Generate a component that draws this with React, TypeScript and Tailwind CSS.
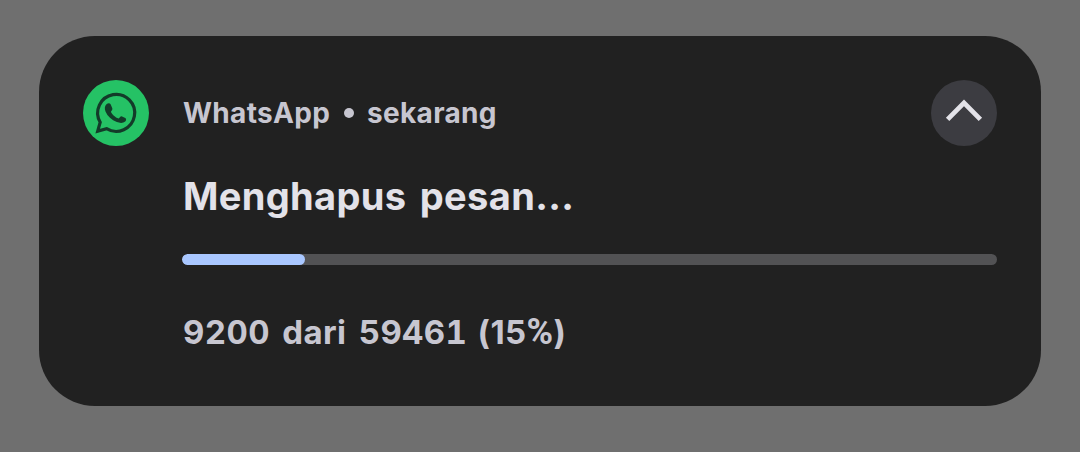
const notification = {
  app: 'WhatsApp',
  time: 'sekarang',
  title: 'Menghapus pesan...',
  done: 9200,
  total: 59461,
}

function WhatsAppIcon() {
  return (
    <svg viewBox="0 0 66 66" className="size-[66px] shrink-0" aria-hidden="true">
      <circle cx="33" cy="33" r="33" fill="#25c265" />
      <path
        d="M14.7 51.1 L17.2 42.2 A18.5 18.5 0 1 1 23.6 48.7 Z"
        fill="none"
        stroke="#133b29"
        strokeWidth="3.2"
      />
      <path
        d="M23.7 24.1 C25 23 26.9 23 27.6 24.2 L29.3 28.2 C29.8 29.6 28.4 30.8 27.9 31.7 C28.9 34.2 32.3 37.5 35.6 38.5 C36.5 37.9 37.2 36.2 38.5 36.2 L42.3 38 C43.6 38.8 43.2 40.7 42.2 41.6 C40.3 43.2 37 43.3 33.9 42.1 C28.6 40.2 24.6 36.4 22.5 31.6 C21.3 28.4 21.7 25.8 23.7 24.1 Z"
        fill="#133b29"
      />
    </svg>
  )
}

function CollapseButton() {
  return (
    <button
      type="button"
      className="flex size-[66px] shrink-0 items-center justify-center rounded-full bg-[#3c3c41]"
    >
      <svg viewBox="0 0 66 66" className="size-[66px]" aria-hidden="true">
        <path d="M16.6 39.4 L33 22.8 L49.4 39.4" fill="none" stroke="#e3e2e8" strokeWidth="4.8" />
      </svg>
    </button>
  )
}

export default function App() {
  const percent = Math.floor((notification.done / notification.total) * 100)

  return (
    <div className="h-[452px] w-[1080px] overflow-hidden bg-[#6f6f6f] px-[39px] pt-9 font-['Inter',sans-serif] font-bold">
      <div className="flex h-[370px] gap-[33px] rounded-[56px] bg-[#212121] px-11 pt-11">
        <WhatsAppIcon />

        <div className="min-w-0 flex-1">
          {/* Header */}
          <div className="flex h-[66px] items-center justify-between">
            <div className="flex items-center pl-px text-[28px] leading-none tracking-[0.3px] whitespace-nowrap text-[#c7c6d0]">
              <span>{notification.app}</span>
              <span className="mr-[13px] ml-[14px] size-[10px] rounded-full bg-[#c7c6d0]" />
              <span>{notification.time}</span>
            </div>
            <CollapseButton />
          </div>

          <h1 className="mt-[26px] pl-px text-[38px] leading-[48px] tracking-[0.35px] [word-spacing:4px] whitespace-nowrap text-[#e3e2e9]">
            {notification.title}
          </h1>

          {/* Progress */}
          <div className="mt-[34px] h-[11px] overflow-hidden rounded-full bg-[#525254]">
            <div className="h-full rounded-full bg-[#a9c7ff]" style={{ width: `${percent}.1%` }} />
          </div>

          <p className="mt-[47px] pl-px text-[33px] leading-10 tracking-[0.4px] [word-spacing:3px] whitespace-nowrap tabular-nums text-[#c7c6d0]">
            {notification.done} dari {notification.total}{' '}
            <span className="-ml-[2px] proportional-nums">
              ({percent}
              <span className="font-['Roboto',sans-serif] text-[36px] leading-none">%</span>)
            </span>
          </p>
        </div>
      </div>
    </div>
  )
}
